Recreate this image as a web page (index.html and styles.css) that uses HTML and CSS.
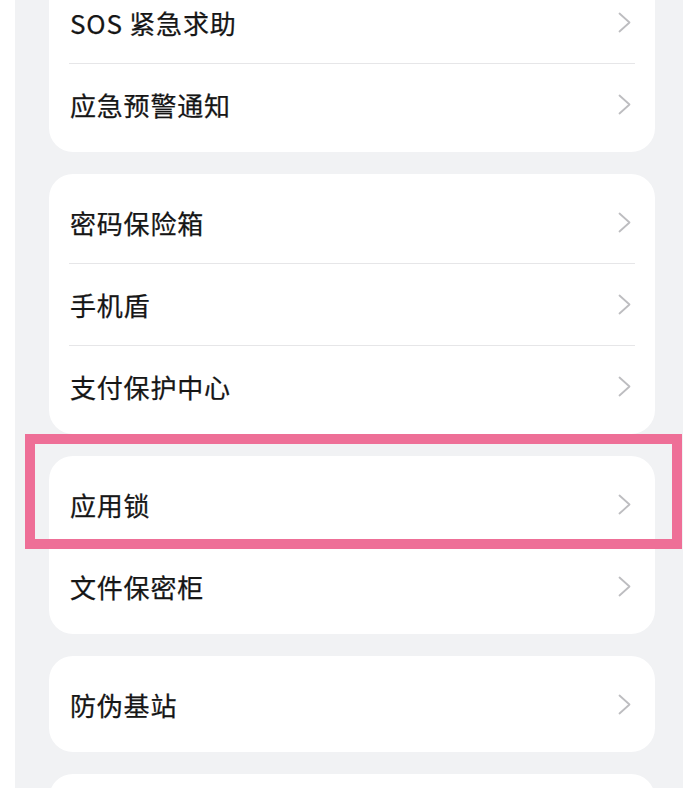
FILE: index.html
```html
<!DOCTYPE html>
<html lang="zh-CN">
<head>
<meta charset="utf-8">
<link rel="stylesheet" href="styles.css">
</head>
<body>
<div class="page">
  <div class="card first">
    <div class="row"><span class="label">SOS 紧急求助</span><svg class="chev" viewBox="0 0 13 21"><path d="M1.5 1.5 L11.5 10.5 L1.5 19.5"/></svg></div>
    <div class="row"><span class="label">应急预警通知</span><svg class="chev" viewBox="0 0 13 21"><path d="M1.5 1.5 L11.5 10.5 L1.5 19.5"/></svg></div>
  </div>
  <div class="card">
    <div class="row"><span class="label">密码保险箱</span><svg class="chev" viewBox="0 0 13 21"><path d="M1.5 1.5 L11.5 10.5 L1.5 19.5"/></svg></div>
    <div class="row"><span class="label">手机盾</span><svg class="chev" viewBox="0 0 13 21"><path d="M1.5 1.5 L11.5 10.5 L1.5 19.5"/></svg></div>
    <div class="row"><span class="label">支付保护中心</span><svg class="chev" viewBox="0 0 13 21"><path d="M1.5 1.5 L11.5 10.5 L1.5 19.5"/></svg></div>
  </div>
  <div class="card">
    <div class="row"><span class="label">应用锁</span><svg class="chev" viewBox="0 0 13 21"><path d="M1.5 1.5 L11.5 10.5 L1.5 19.5"/></svg></div>
    <div class="row"><span class="label">文件保密柜</span><svg class="chev" viewBox="0 0 13 21"><path d="M1.5 1.5 L11.5 10.5 L1.5 19.5"/></svg></div>
  </div>
  <div class="card">
    <div class="row"><span class="label">防伪基站</span><svg class="chev" viewBox="0 0 13 21"><path d="M1.5 1.5 L11.5 10.5 L1.5 19.5"/></svg></div>
  </div>
  <div class="card">
    <div class="row"><span class="label"></span></div>
  </div>
  <div class="highlight"></div>
</div>
</body>
</html>
```
FILE: styles.css
```css
html {
  margin: 0;
  padding: 0;
  background: #f1f2f4;
}
body {
  margin: 0;
  padding: 0;
  border-left: 15px solid #ffffff;
  background: #f1f2f4;
  height: 788px;
  overflow: hidden;
  font-family: "Noto Sans CJK SC", "Noto Sans", sans-serif;
}
.page {
  position: relative;
  width: 606px;
  height: 788px;
  padding: 0 28px 0 34px;
  overflow: hidden;
}
.card {
  background: #ffffff;
  border-radius: 24px;
  padding: 7px 0;
  margin-bottom: 22px;
}
.card.first {
  margin-top: -26px;
}
.row {
  box-sizing: border-box;
  height: 82px;
  margin: 0 20px;
  display: flex;
  align-items: center;
  justify-content: space-between;
}
.row + .row {
  border-top: 1px solid #e6e6e8;
}
.label {
  padding-left: 1px;
  font-size: 26px;
  font-weight: 400;
  letter-spacing: 0.8px;
  color: #161616;
  -webkit-text-stroke: 0.25px #161616;
}
.chev {
  width: 13px;
  height: 21px;
  margin-right: 4px;
  fill: none;
  stroke: #bdbdc0;
  stroke-width: 1.8;
  stroke-linecap: round;
  stroke-linejoin: round;
}
.highlight {
  position: absolute;
  left: 10px;
  top: 434px;
  width: 637px;
  height: 95px;
  border: 10px solid #ee6f97;
}
```
